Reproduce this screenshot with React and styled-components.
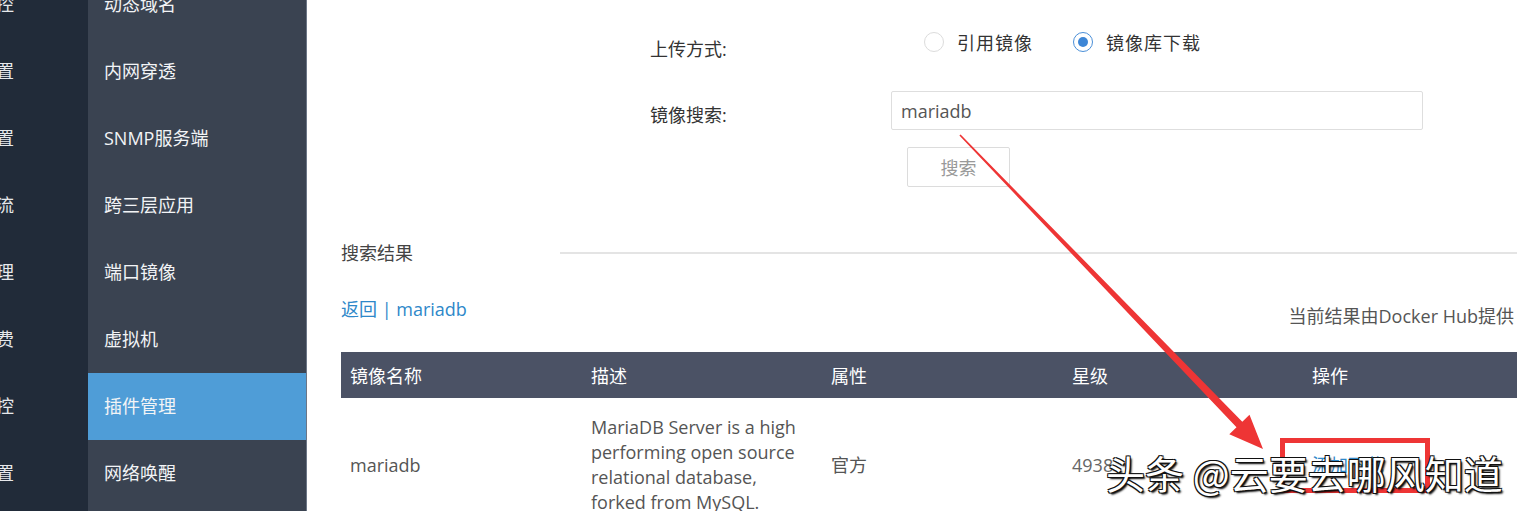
import React, { useState } from 'react';
import styled, { createGlobalStyle } from 'styled-components';

const GlobalStyle = createGlobalStyle`
  html, body {
    margin: 0;
    padding: 0;
    overflow: hidden;
    background: #fff;
  }
  body {
    font-family: "Open Sans", "Noto Sans CJK SC", sans-serif;
    color: #333;
  }
`;

const railItems = ['流量监控', '系统设置', '网络设置', '智能分流', '用户管理', '认证计费', '行为管控', '高级设置'];
const subItems = ['动态域名', '内网穿透', 'SNMP服务端', '跨三层应用', '端口镜像', '虚拟机', '插件管理', '网络唤醒'];

const App = () => {
  const [mode, setMode] = useState('hub');
  const [query, setQuery] = useState('mariadb');

  return (
    <>
      <GlobalStyle />
      <Viewport>
        <Shell>
          <Rail>
            {railItems.map((t) => (
              <RailItem key={t}>{t}</RailItem>
            ))}
          </Rail>

          <SubNav>
            {subItems.map((t) => (
              <SubItem key={t} $active={t === '插件管理'}>
                {t}
              </SubItem>
            ))}
          </SubNav>

          <Main>
            <Form>
              <Label>上传方式:</Label>
              <RadioGroup>
                <RadioOption onClick={() => setMode('ref')}>
                  <RadioDot $checked={mode === 'ref'} />
                  引用镜像
                </RadioOption>
                <RadioOption onClick={() => setMode('hub')}>
                  <RadioDot $checked={mode === 'hub'} />
                  镜像库下载
                </RadioOption>
              </RadioGroup>

              <Label>镜像搜索:</Label>
              <SearchInput
                type="text"
                value={query}
                onChange={(e) => setQuery(e.target.value)}
              />

              <span />
              <SearchBtn>搜索</SearchBtn>
            </Form>

            <SectionHead>
              <SectionTitle>搜索结果</SectionTitle>
              <SectionLine />
            </SectionHead>

            <NoteRow>
              <BackLink>返回 | mariadb</BackLink>
              <SourceNote>当前结果由Docker Hub提供</SourceNote>
            </NoteRow>

            <Table>
              <HeadCell>镜像名称</HeadCell>
              <HeadCell>描述</HeadCell>
              <HeadCell>属性</HeadCell>
              <HeadCell>星级</HeadCell>
              <HeadCell>操作</HeadCell>

              <Cell>mariadb</Cell>
              <Cell>
                MariaDB Server is a high
                <br />
                performing open source
                <br />
                relational database,
                <br />
                forked from MySQL.
              </Cell>
              <Cell>官方</Cell>
              <Cell $muted>4938</Cell>
              <Cell>
                <OpLink>添加下载</OpLink>
              </Cell>
            </Table>
          </Main>
        </Shell>

        {/* annotation drawn over the screenshot */}
        <Annotation width="1517" height="511" viewBox="0 0 1517 511">
          <polygon
            fill="#ee3535"
            points="960.6,134.4 1242.3,421.7 1249.5,414.8 1263,449 1229.3,434.2 1236.5,427.3 959.4,135.6"
          />
          <rect x="1282.5" y="440.5" width="145" height="50" fill="none" stroke="#ee3535" strokeWidth="5" />
        </Annotation>

        <Watermark>头条 @云要去哪风知道</Watermark>
      </Viewport>
    </>
  );
};

const Viewport = styled.div`
  position: relative;
  width: 1517px;
  height: 511px;
  overflow: hidden;
`;

const Shell = styled.div`
  display: flex;
  width: max-content;
  margin-top: -29px;
`;

const Rail = styled.nav`
  width: 88px;
  flex: none;
  display: flex;
  flex-direction: column;
  background: #212b39;
  padding-bottom: 40px;
`;

const RailItem = styled.div`
  height: 67px;
  box-sizing: border-box;
  display: flex;
  align-items: center;
  justify-content: flex-end;
  padding: 0 74px 4px 0;
  overflow: hidden;
  white-space: nowrap;
  font-size: 18px;
  color: #e6e8eb;
`;

const SubNav = styled.nav`
  width: 218px;
  flex: none;
  display: flex;
  flex-direction: column;
  background: #3a4351;
  border-right: 1px solid #6c7686;
`;

const SubItem = styled.div`
  height: 67px;
  box-sizing: border-box;
  display: flex;
  align-items: center;
  padding: 0 0 4px 16px;
  font-size: 18px;
  color: #f2f4f6;
  background: ${(p) => (p.$active ? '#4f9dd7' : 'transparent')};
`;

const Main = styled.main`
  width: 1200px;
  flex: none;
  padding: 54px 0 0 34px;
`;

const Form = styled.div`
  display: grid;
  grid-template-columns: 241px 532px;
  grid-template-rows: 40px 39px 40px;
  row-gap: 26px;
  margin-left: 309px;
  align-items: center;

  & > :nth-child(5),
  & > :nth-child(6) {
    margin-top: -19px;
  }
`;

const Label = styled.label`
  font-size: 18px;
  color: #333;
  padding-top: 6px;
`;

const RadioGroup = styled.div`
  display: flex;
  align-items: center;
  gap: 40px;
  padding-left: 33px;
  margin-top: -6px;
`;

const RadioOption = styled.label`
  display: flex;
  align-items: center;
  gap: 13px;
  font-size: 18px;
  letter-spacing: 1px;
  color: #333;
  cursor: pointer;
`;

const RadioDot = styled.span`
  width: 18px;
  height: 18px;
  border-radius: 50%;
  border: 1px solid ${(p) => (p.$checked ? '#4a8fd8' : '#dcdcdc')};
  display: flex;
  align-items: center;
  justify-content: center;

  &::after {
    content: '';
    width: 10px;
    height: 10px;
    border-radius: 50%;
    background: ${(p) => (p.$checked ? '#3d86d6' : 'transparent')};
  }
`;

const SearchInput = styled.input`
  box-sizing: border-box;
  width: 532px;
  height: 39px;
  padding: 0 9px;
  border: 1px solid #dedede;
  border-radius: 2px;
  font-family: inherit;
  font-size: 18px;
  color: #555;
  outline: none;
`;

const SearchBtn = styled.button`
  box-sizing: border-box;
  width: 103px;
  height: 40px;
  margin-left: 16px;
  background: #fff;
  border: 1px solid #dcdcdc;
  border-radius: 2px;
  font-family: inherit;
  font-size: 18px;
  color: #999;
`;

const SectionHead = styled.div`
  display: flex;
  align-items: center;
  margin-top: 44px;
`;

const SectionTitle = styled.h3`
  width: 219px;
  margin: 0;
  font-size: 18px;
  font-weight: 400;
  line-height: 26px;
  color: #444;
`;

const SectionLine = styled.div`
  flex: 1;
  height: 2px;
  background: #e4e4e4;
`;

const NoteRow = styled.div`
  display: flex;
  justify-content: space-between;
  align-items: flex-start;
  margin-top: 30px;
  padding-right: 27px;
`;

const BackLink = styled.a`
  font-size: 18px;
  line-height: 26px;
  color: #2e88c9;
`;

const SourceNote = styled.span`
  font-size: 18px;
  line-height: 26px;
  color: #555;
  padding-top: 7px;
`;

const Table = styled.div`
  display: grid;
  grid-template-columns: 241px 240px 241px 240px 1fr;
  margin-top: 23px;
`;

const HeadCell = styled.div`
  height: 46px;
  display: flex;
  align-items: center;
  padding-left: 9px;
  background: #4b5265;
  color: #fff;
  font-size: 18px;
`;

const Cell = styled.div`
  display: flex;
  align-items: center;
  padding: 17px 0 17px 9px;
  font-size: 18px;
  line-height: 25px;
  color: ${(p) => (p.$muted ? '#666' : '#555')};
`;

const OpLink = styled.a`
  color: #2e88c9;
`;

const Annotation = styled.svg`
  position: absolute;
  left: 0;
  top: 0;
  pointer-events: none;
`;

const Watermark = styled.div`
  position: absolute;
  left: 1106px;
  top: 446px;
  font-family: "Noto Sans CJK SC", sans-serif;
  font-size: 39px;
  line-height: 52px;
  color: #fff;
  white-space: nowrap;
  text-shadow: -1px -1px 0 #111, 1px -1px 0 #111, -1px 1px 0 #111, 1px 1px 0 #111, 2px 2px 2px #000;
  pointer-events: none;
`;

export default App;
